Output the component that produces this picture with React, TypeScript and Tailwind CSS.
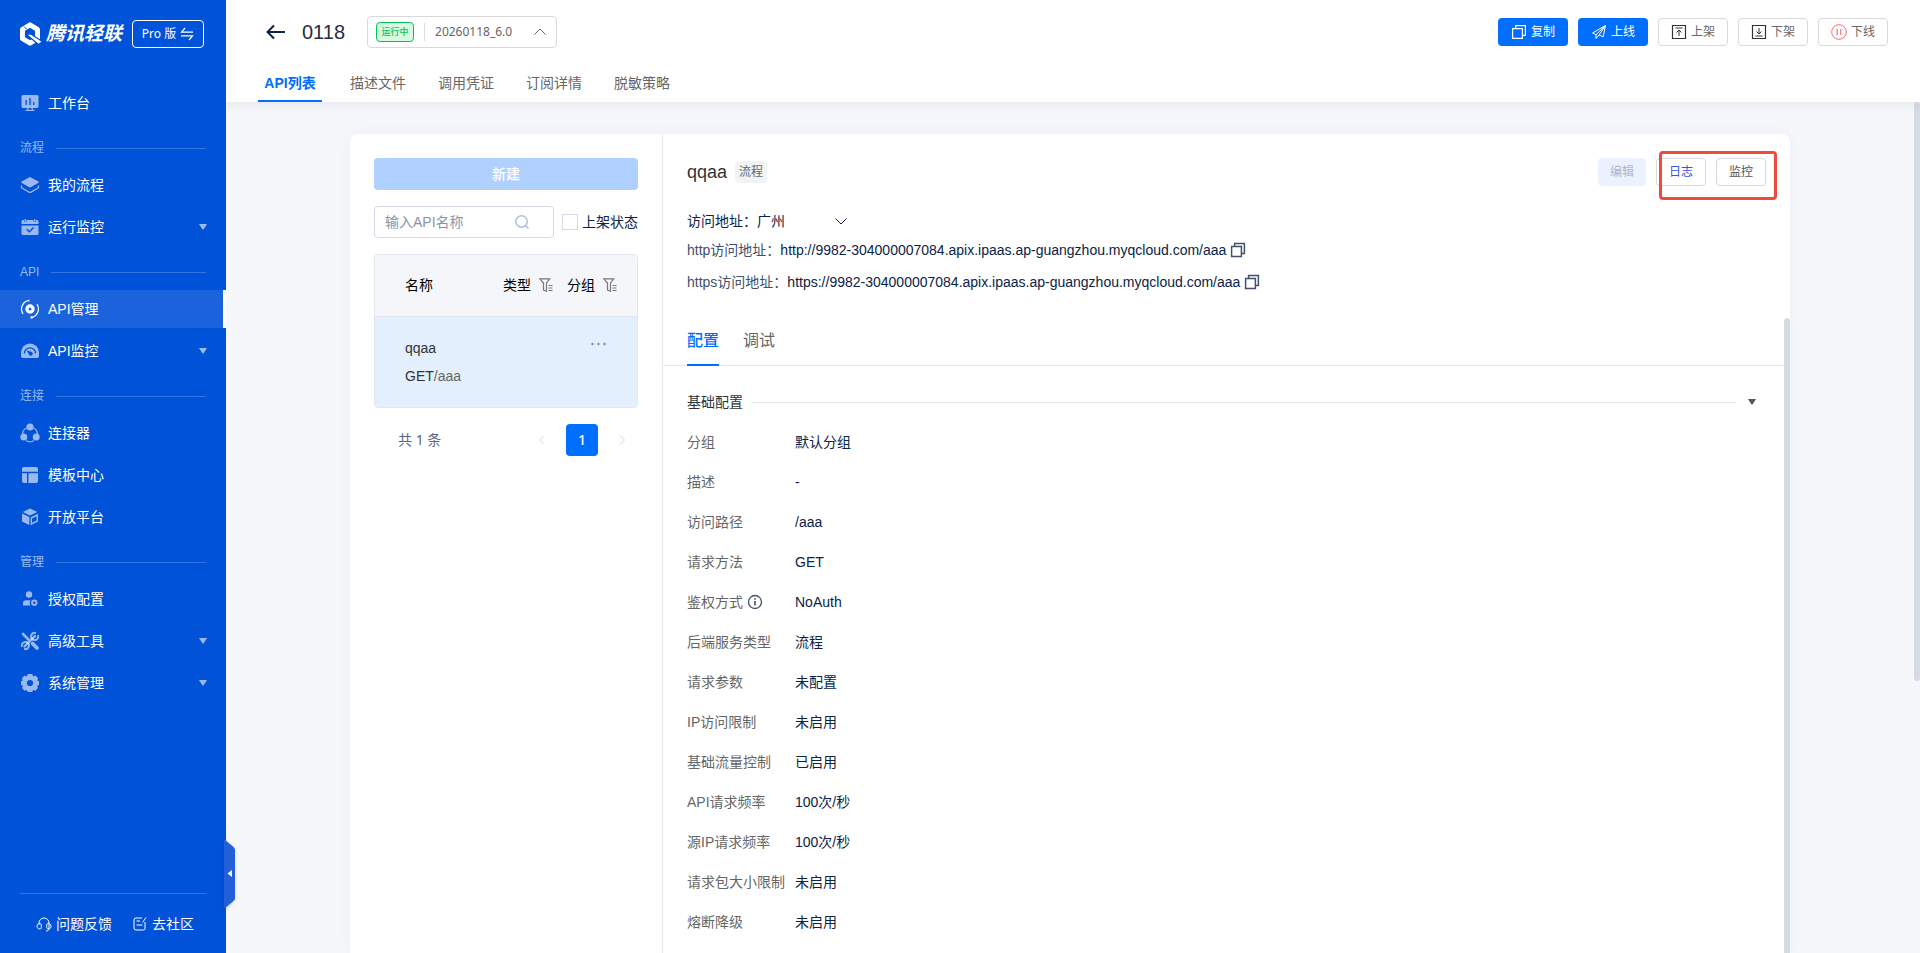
import { useState, type ReactNode } from 'react'

const sections: { title?: string; items: { label: string; icon: ReactNode; expandable?: boolean }[] }[] = [
  { items: [{ label: '工作台', icon: <BoardIcon /> }] },
  {
    title: '流程',
    items: [
      { label: '我的流程', icon: <LayersIcon /> },
      { label: '运行监控', icon: <CalendarIcon />, expandable: true },
    ],
  },
  {
    title: 'API',
    items: [
      { label: 'API管理', icon: <ApiIcon /> },
      { label: 'API监控', icon: <GaugeIcon />, expandable: true },
    ],
  },
  {
    title: '连接',
    items: [
      { label: '连接器', icon: <ConnectorIcon /> },
      { label: '模板中心', icon: <TemplateIcon /> },
      { label: '开放平台', icon: <CubeIcon /> },
    ],
  },
  {
    title: '管理',
    items: [
      { label: '授权配置', icon: <UserIcon /> },
      { label: '高级工具', icon: <ToolsIcon />, expandable: true },
      { label: '系统管理', icon: <GearIcon />, expandable: true },
    ],
  },
]

const topTabs = ['API列表', '描述文件', '调用凭证', '订阅详情', '脱敏策略']

const details = [
  { label: '分组', value: '默认分组' },
  { label: '描述', value: '-' },
  { label: '访问路径', value: '/aaa' },
  { label: '请求方法', value: 'GET' },
  { label: '鉴权方式', value: 'NoAuth', info: true },
  { label: '后端服务类型', value: '流程' },
  { label: '请求参数', value: '未配置' },
  { label: 'IP访问限制', value: '未启用' },
  { label: '基础流量控制', value: '已启用' },
  { label: 'API请求频率', value: '100次/秒' },
  { label: '源IP请求频率', value: '100次/秒' },
  { label: '请求包大小限制', value: '未启用' },
  { label: '熔断降级', value: '未启用' },
]

const host = '9982-304000007084.apix.ipaas.ap-guangzhou.myqcloud.com/aaa'

/* ---------- Icons ---------- */

function Logo() {
  return (
    <svg width="22" height="24" viewBox="0 0 22 24">
      <path d="M10 2.900 17.500 7.300v9.400L10 21.100 2.500 16.700V7.300Z" fill="none" stroke="#fff" strokeWidth="5" strokeLinejoin="round" />
      <path d="M6.500 12.500 10.500 11.800 22.500 19.500 18.500 22.500Z" fill="#fff" stroke="#0052d9" strokeWidth="1.200" />
      <path d="M4 4.500 7 7.500" stroke="#0052d9" strokeWidth="1" />
    </svg>
  )
}

function BoardIcon() {
  return (
    <svg width="20" height="20" viewBox="0 0 20 20" fill="currentColor">
      <path
        fillRule="evenodd"
        d="M3 2h14a1.500 1.500 0 0 1 1.500 1.500v10A1.500 1.500 0 0 1 17 15H3a1.500 1.500 0 0 1-1.500-1.500v-10A1.500 1.500 0 0 1 3 2Zm2.500 5v5h1.300V7H5.500Zm3.800-2v7h1.400V5H9.300Zm3.900 4v3h1.300V9h-1.300Z"
      />
      <path d="M7 15h1.500v1.500H7zM11.500 15H13v1.500h-1.500zM5.500 16.700h9V18h-9z" />
    </svg>
  )
}

function LayersIcon() {
  return (
    <svg width="20" height="20" viewBox="0 0 20 20" fill="currentColor">
      <path d="M10 2 18.500 6.600Q19.200 7.200 18.500 7.800L10.700 12.200Q10 12.500 9.300 12.200L1.500 7.800Q.8 7.200 1.500 6.600Z" />
      <path d="M1.500 10.500v2.200L9.300 17.300q.7.300 1.400 0l7.800-4.600v-2.200" fill="none" stroke="currentColor" strokeWidth="1.300" />
    </svg>
  )
}

function CalendarIcon() {
  return (
    <svg width="20" height="20" viewBox="0 0 20 20" fill="currentColor">
      <path d="M3 3h1v1.500h2.500V3h7v1.500H16V3h1a1.500 1.500 0 0 1 1.500 1.500V7h-17V4.500A1.500 1.500 0 0 1 3 3Z" />
      <path d="M4.600 2H6v2H4.600zM14 2h1.400v2H14z" />
      <path
        fillRule="evenodd"
        d="M1.500 8.500h17v8A1.500 1.500 0 0 1 17 18H3a1.500 1.500 0 0 1-1.500-1.500Zm5.700 3.300-.9.900 3 3 4.800-4.700-1-1-3.800 3.700Z"
      />
    </svg>
  )
}

function ApiIcon() {
  return (
    <svg width="20" height="20" viewBox="0 0 20 20" fill="none" stroke="currentColor">
      <circle cx="10" cy="10" r="3.100" strokeWidth="3.200" />
      <path d="M9 1.300A8.800 8.800 0 0 0 3 14.800M11 18.700A8.800 8.800 0 0 0 17 5.200" strokeWidth="1.200" />
      <circle cx="8.800" cy="1.600" r=".9" fill="currentColor" stroke="none" />
      <circle cx="11.600" cy="18.400" r="1.200" fill="currentColor" stroke="none" />
    </svg>
  )
}

function GaugeIcon() {
  return (
    <svg width="20" height="20" viewBox="0 0 20 20">
      <path fill="currentColor" d="M1 11.500a9 9 0 0 1 18 0v3.500a2 2 0 0 1-2 2H3a2 2 0 0 1-2-2Z" />
      <path d="M4.400 12.500a5.600 5.600 0 0 1 11.200 0" fill="none" stroke="#0052d9" strokeWidth="1.300" />
      <path d="M6.800 9.300l4.200 1.500a2 2 0 1 1-2.200 2.400Z" fill="#0052d9" />
    </svg>
  )
}

function ConnectorIcon() {
  return (
    <svg width="20" height="20" viewBox="0 0 20 20" fill="currentColor">
      <circle cx="10" cy="4" r="3.600" />
      <circle cx="3.800" cy="14" r="3.500" />
      <circle cx="16.200" cy="14" r="3.500" />
      <path d="M6.500 5C4 6.300 2.600 8.500 2.600 11M13.500 5c2.500 1.300 3.900 3.500 3.900 6M6 17.500c2.500 1.600 5.500 1.600 8 0" fill="none" stroke="currentColor" strokeWidth="1.200" />
    </svg>
  )
}

function TemplateIcon() {
  return (
    <svg width="20" height="20" viewBox="0 0 20 20" fill="currentColor">
      <path d="M4 2h12a2 2 0 0 1 2 2v2.700H2V4a2 2 0 0 1 2-2ZM2 8.200h5V18H4a2 2 0 0 1-2-2ZM8.400 8.200H18V16a2 2 0 0 1-2 2H8.400Z" />
    </svg>
  )
}

function CubeIcon() {
  return (
    <svg width="20" height="20" viewBox="0 0 20 20" fill="currentColor">
      <path d="M10 1.500 17.300 5 10 8.600 2.700 5ZM2 6.500l7.300 3.600V18L2 14.500Z" />
      <path d="m11.300 11 6-3v6l-6 3Z" fill="none" stroke="currentColor" strokeWidth="1.400" />
    </svg>
  )
}

function UserIcon() {
  return (
    <svg width="20" height="20" viewBox="0 0 20 20" fill="currentColor">
      <circle cx="9" cy="5.500" r="3.200" />
      <path d="M6 11.300h4.600c-1 1.500-1.200 3.500-.4 5.200H3v-2.200a3 3 0 0 1 3-3Z" />
      <circle cx="14.300" cy="13.700" r="2.200" fill="none" stroke="currentColor" strokeWidth="1.900" />
    </svg>
  )
}

function ToolsIcon() {
  return (
    <svg width="20" height="20" viewBox="0 0 20 20" fill="none" stroke="currentColor" strokeLinecap="round">
      <path d="M3 3l5.500 5.500" strokeWidth="2.600" />
      <path d="M12.500 12.500l4.500 4.500" strokeWidth="3.800" />
      <path d="M4.500 15.500 15 5" strokeWidth="2.400" />
      <path d="M15.200 1.900a3.600 3.600 0 1 0 3 3.100" strokeWidth="2" />
      <path d="M4.800 18.100a3.600 3.600 0 1 0-3-3.100" strokeWidth="2" />
    </svg>
  )
}

function GearIcon() {
  return (
    <svg width="20" height="20" viewBox="0 0 20 20" fill="currentColor">
      <path
        fillRule="evenodd"
        d="M7.700 1h4.600l.8 2.400 2.400-1 2.600 2.900-.9 2.200L19 8.300v3.700l-2 .8 1 2.300-2.700 2.700-2.300-.9-.7 2.100H7.700L7 16.900l-2.300.9L2 15.100l1-2.300-2-.8V8.300l1.800-.8-.9-2.200 2.600-2.900 2.400 1ZM10 6.900a3.100 3.100 0 1 0 0 6.200 3.100 3.100 0 0 0 0-6.200Z"
      />
    </svg>
  )
}

function CopyIcon({ strokeWidth = 1.2 }: { strokeWidth?: number }) {
  return (
    <svg width="16" height="16" viewBox="0 0 16 16" fill="none" stroke="currentColor" strokeWidth={strokeWidth}>
      <path d="M1.600 4.600h9.800v9.800H1.600zM4.600 4.600V1.600h9.800v9.800h-3" />
    </svg>
  )
}

function SendIcon() {
  return (
    <svg width="16" height="16" viewBox="0 0 16 16" fill="none" stroke="currentColor" strokeWidth="1" strokeLinejoin="round">
      <path d="M14.500 1.500 1.500 9l3.500 1.700L14.500 1.500l-2.300 11.200L8 11M5 10.700V14.500L8 11l6.500-9.500" />
    </svg>
  )
}

function ShelfIcon({ down }: { down?: boolean }) {
  return (
    <svg width="16" height="16" viewBox="0 0 16 16" fill="none" stroke="#333" strokeWidth="1">
      <path d="M1.500 1.500h13v13h-13z" strokeWidth="1.200" />
      {down ? <path d="M8 4v6M5.500 7.500 8 10l2.500-2.500M4.500 12h7" /> : <path d="M8 12V6M5.500 8.500 8 6l2.500 2.500M4.500 4h7" />}
    </svg>
  )
}

function PauseIcon() {
  return (
    <svg width="16" height="16" viewBox="0 0 16 16" fill="none" stroke="#f56c77" strokeWidth="1">
      <circle cx="8" cy="8" r="7.300" />
      <path d="M6.200 5v6M9.800 5v6" strokeWidth="1.200" />
    </svg>
  )
}

function FilterIcon() {
  return (
    <svg width="14" height="14" viewBox="0 0 14 14" fill="none" stroke="#777" strokeWidth="1.200">
      <path d="M.8.800h9.900L7.500 5v8.200L4.500 12V5Z" />
      <path d="M9.500 7.500h4M9.500 10h4M9.500 12.500h4" />
    </svg>
  )
}

function Chevron({ className, d }: { className?: string; d: string }) {
  return (
    <svg className={className} width="12" height="12" viewBox="0 0 12 12" fill="none" stroke="currentColor">
      <path d={d} />
    </svg>
  )
}

function Caret({ className }: { className?: string }) {
  return (
    <svg className={className} width="8" height="6" viewBox="0 0 8 6" fill="currentColor">
      <path d="M0 0h8L4.500 5.500h-1Z" />
    </svg>
  )
}

/* ---------- Layout ---------- */

function Sidebar() {
  const [active, setActive] = useState('API管理')

  return (
    <aside className="relative z-20 flex w-[226px] shrink-0 flex-col bg-[#0052d9] text-white">
      <div className="flex h-17 items-center pl-5">
        <Logo />
        <span className="ml-1 text-[19px] font-bold italic">腾讯轻联</span>
        <button className="ml-[10px] flex h-7 w-18 items-center justify-center gap-1 rounded border border-white font-['Noto_Sans','Noto_Sans_CJK_SC',sans-serif] text-xs">
          Pro 版
          <svg width="14" height="14" viewBox="0 0 14 14" fill="none" stroke="#fff" strokeWidth="1.200">
            <path d="M5 1 1.500 5.200H13M1 8.800h11.500L9 13" />
          </svg>
        </button>
      </div>

      <nav className="mt-4">
        {sections.map((section) => (
          <div key={section.items[0].label}>
            {section.title && (
              <div className="mt-2 flex h-9 items-center gap-3 px-5 text-xs text-white/60">
                {section.title}
                <span className="h-px flex-1 bg-white/20" />
              </div>
            )}
            <div className="flex flex-col gap-1">
              {section.items.map((item) => (
                <button
                  key={item.label}
                  onClick={() => setActive(item.label)}
                  className={`flex h-[38px] items-center gap-2 border-r-[3px] pr-4 pl-5 text-sm ${
                    active === item.label ? 'border-white bg-white/10' : 'border-transparent'
                  }`}
                >
                  <span className={active === item.label ? 'text-white' : 'text-white/60'}>{item.icon}</span>
                  {item.label}
                  {item.expandable && <Caret className="ml-auto text-white/60" />}
                </button>
              ))}
            </div>
          </div>
        ))}
      </nav>

      <div className="mx-5 mt-auto flex h-15 items-center justify-center gap-5 border-t border-white/20 pl-1 text-sm">
        <a href="#feedback" className="flex items-center gap-1">
          <svg width="16" height="16" viewBox="0 0 16 16" fill="none" stroke="currentColor">
            <path d="M3 8.500V7a5 5 0 0 1 10 0v5c0 2-1 3-3 3M4 7.500c-2 0-3 1.200-3 2.800S2.200 13 4 13c1 0 1.300-.5 1.300-2.700S5 7.500 4 7.500ZM12.500 7.500c1.500 0 2.500 1.200 2.500 2.800S14 13 12.500 13c-1.300 0-1.800-.5-1.800-2.700s.5-2.800 1.800-2.800Z" />
          </svg>
          问题反馈
        </a>
        <a href="#community" className="flex items-center gap-1">
          <svg width="16" height="16" viewBox="0 0 16 16" fill="none" stroke="currentColor">
            <path d="M10 2H4a2 2 0 0 0-2 2v8a2 2 0 0 0 2 2h7.500a1.500 1.500 0 0 0 1.500-1.500V6M4.500 5H8M4.500 9h6M10.500 6.500 14 1.500" />
          </svg>
          去社区
        </a>
      </div>

      <button aria-label="收起" className="absolute right-[-10px] bottom-11 h-[70px] w-3 text-[#225fd8] drop-shadow">
        <svg width="12" height="70" viewBox="0 0 12 70">
          <path fill="currentColor" d="M0 0 9.500 8q1.500 1.500 1.500 3v48q0 1.500-1.500 3L0 70Z" />
          <path fill="#fff" d="M8 31v7l-4.500-3.500Z" />
        </svg>
      </button>
    </aside>
  )
}

function Header() {
  const button = 'flex h-7 w-[70px] items-center justify-center gap-1 rounded text-xs'

  return (
    <header className="relative z-10 bg-white px-7 shadow-[0_2px_12px_rgba(0,0,0,0.08)]">
      <div className="flex items-center pt-4 pr-1 pl-3">
        <button aria-label="返回">
          <svg width="20" height="16" viewBox="0 0 20 16" fill="none" stroke="#0b2346" strokeWidth="2">
            <path d="M8 1.500 1.500 8 8 14.500M1.500 8H19" />
          </svg>
        </button>
        <h1 className="ml-4 text-xl text-[#222f45]">0118</h1>
        <div className="relative ml-[22px] flex h-8 w-[190px] items-center rounded border border-[#d9d9d9] pl-2 font-['Noto_Sans','Noto_Sans_CJK_SC',sans-serif] text-xs text-[#666]">
          <span className="flex h-5 w-[38px] items-center justify-center rounded-sm border border-[#0abf5b] bg-[#d6fbe0] text-[9px] font-medium text-[#0abf5b]">
            运行中
          </span>
          <span className="mx-[10px] h-[18px] w-px bg-[#dcdfe6]" />
          <select aria-label="版本" className="flex-1 appearance-none outline-none">
            <option>20260118_6.0</option>
          </select>
          <Chevron className="pointer-events-none absolute right-[10px]" d="M.5 8.500 6 3l5.500 5.500" />
        </div>

        <div className="ml-auto flex gap-[10px]">
          <button className={`${button} bg-[#006eff] text-white`}>
            <CopyIcon />
            复制
          </button>
          <button className={`${button} bg-[#006eff] text-white`}>
            <SendIcon />
            上线
          </button>
          <button className={`${button} border border-[#d9d9d9] text-[#666]`}>
            <ShelfIcon />
            上架
          </button>
          <button className={`${button} border border-[#d9d9d9] text-[#666]`}>
            <ShelfIcon down />
            下架
          </button>
          <button className={`${button} border border-[#d9d9d9] text-[#666]`}>
            <PauseIcon />
            下线
          </button>
        </div>
      </div>

      <div className="mt-4 flex gap-4">
        {topTabs.map((tab, i) => (
          <button
            key={tab}
            className={`relative h-[38px] w-18 text-sm ${i === 0 ? 'font-bold text-[#006eff]' : 'text-[#666]'}`}
          >
            {tab}
            {i === 0 && <span className="absolute inset-x-1 bottom-0 h-0.5 bg-[#006eff]" />}
          </button>
        ))}
      </div>
    </header>
  )
}

function ApiList() {
  return (
    <section className="w-[313px] shrink-0 border-r border-[#e7e7e7] p-6 text-sm">
      <button className="h-8 w-full rounded bg-[#b0d1ff] font-medium text-white" disabled>
        新建
      </button>

      <div className="mt-4 flex items-center justify-between">
        <div className="relative flex items-center">
          <input
            type="text"
            aria-label="输入API名称"
            placeholder="输入API名称"
            className="h-8 w-[180px] rounded border border-[#d3d9e6] px-[10px] outline-none placeholder:text-[#8b93a7]"
          />
          <svg className="absolute right-6" width="16" height="16" viewBox="0 0 16 16" fill="none" stroke="#b0bfd6" strokeWidth="1.500">
            <circle cx="7.500" cy="7.500" r="5.700" />
            <path d="m11.500 11.500 3 3" />
          </svg>
        </div>
        <label className="flex items-center gap-1 text-[#0b2346]">
          <input type="checkbox" className="size-4 appearance-none border border-[#d3d9e6]" />
          上架状态
        </label>
      </div>

      <div className="mt-4 overflow-hidden rounded border border-[#e2e6f0]">
        <table className="w-full table-fixed text-left">
          <thead className="h-[61px] border-b border-[#e2e6f0] bg-[#f5f6fa] text-black">
            <tr>
              <th className="w-[128px] pl-[30px] font-normal">名称</th>
              <th className="w-16 font-normal">
                <span className="flex items-center gap-2">
                  类型
                  <FilterIcon />
                </span>
              </th>
              <th className="font-normal">
                <span className="flex items-center gap-2">
                  分组
                  <FilterIcon />
                </span>
              </th>
            </tr>
          </thead>
          <tbody>
            <tr className="h-[91px] bg-[#e3effd]">
              <td colSpan={2} className="pl-[30px] leading-7 text-[#333]">
                <div>qqaa</div>
                <div>
                  GET<span className="text-[#666]">/aaa</span>
                </div>
              </td>
              <td className="pt-4 pl-6 align-top">
                <button aria-label="更多" className="text-[#7a86b0]">
                  <svg width="16" height="18" viewBox="0 0 16 18" fill="currentColor">
                    <circle cx="1.500" cy="11" r="1.200" />
                    <circle cx="7.500" cy="11" r="1.200" />
                    <circle cx="13.500" cy="11" r="1.200" />
                  </svg>
                </button>
              </td>
            </tr>
          </tbody>
        </table>
      </div>

      <div className="mt-4 flex items-center pl-6 font-['Noto_Sans','Noto_Sans_CJK_SC',sans-serif] text-[#5a6488]">
        共 1 条
        <div className="ml-auto flex items-center text-[#d0d5e0]">
          <button aria-label="上一页" className="flex size-8 items-center justify-center">
            <Chevron d="M8 1.500 3.500 6 8 10.500" />
          </button>
          <button className="mx-2 size-8 rounded bg-[#006eff] font-medium text-white">1</button>
          <button aria-label="下一页" className="flex size-8 items-center justify-center">
            <Chevron d="M4 1.500 8.500 6 4 10.500" />
          </button>
        </div>
      </div>
    </section>
  )
}

function ApiDetail() {
  return (
    <section className="relative flex min-w-0 flex-1 flex-col overflow-hidden">
      <div className="flex h-[76px] items-center px-6">
        <h2 className="text-lg text-[#333]">qqaa</h2>
        <span className="ml-2 flex h-[22px] items-center rounded-sm bg-[#f2f3f5] px-1 text-xs text-[#666]">流程</span>
        <div className="ml-auto flex gap-[10px] text-xs">
          <button className="h-7 w-12 rounded bg-[#ebf2ff] text-[#b0b6cc]" disabled>
            编辑
          </button>
          <button className="h-7 w-[50px] rounded border border-[#d9d9d9] text-[#3355e0]">日志</button>
          <button className="h-7 w-[50px] rounded border border-[#d9d9d9] text-[#555]">监控</button>
        </div>
        <div className="absolute top-[17px] right-[13px] h-[49px] w-[118px] rounded-sm border-[3px] border-[#f04a3e]" />
      </div>

      <div className="-mt-1 pl-6 text-sm text-[#0b2346]">
        <div className="flex h-[30px] items-center">
          <label htmlFor="region">访问地址：</label>
          <div className="relative flex items-center">
            <select id="region" className="w-[90px] appearance-none outline-none">
              <option>广州</option>
            </select>
            <Chevron className="pointer-events-none absolute right-0" d="M.5 3.500 6 9l5.500-5.500" />
          </div>
        </div>
        <div className="flex h-7 items-center">
          <span className="text-[#42506b]">http访问地址：</span>
          http://{host}
          <button aria-label="复制http地址" className="ml-1 text-[#42506b]">
            <CopyIcon strokeWidth={1.5} />
          </button>
        </div>
        <div className="flex h-9 items-center">
          <span className="text-[#42506b]">https访问地址：</span>
          https://{host}
          <button aria-label="复制https地址" className="ml-1 text-[#42506b]">
            <CopyIcon strokeWidth={1.5} />
          </button>
        </div>
      </div>

      <div className="mt-4 mr-[6px] flex h-[50px] gap-6 border-b border-[#e7e7e7] pl-6">
        <button className="-mb-px border-b-2 border-[#006eff] pt-0.5 font-medium text-[#006eff]">配置</button>
        <button className="-mb-px border-b-2 border-transparent pt-0.5 text-[#666]">调试</button>
      </div>

      <div className="overflow-hidden pt-4 pr-[34px] pl-6 text-sm">
        <div className="flex h-10 items-center text-[#333]">
          基础配置
          <span className="ml-2 h-px flex-1 bg-[#e7e7e7]" />
          <button aria-label="收起基础配置" className="ml-3 text-[#555]">
            <Caret />
          </button>
        </div>
        <dl>
          {details.map((row) => (
            <div key={row.label} className="flex h-10 items-center">
              <dt className="flex w-[108px] items-center gap-1 text-[#666]">
                {row.label}
                {row.info && (
                  <svg width="16" height="16" viewBox="0 0 16 16" fill="none" stroke="#42506b" strokeWidth="1.300">
                    <circle cx="8" cy="8" r="6.500" />
                    <path d="M8 7v4.500M8 4.300v1.500" strokeWidth="1.600" />
                  </svg>
                )}
              </dt>
              <dd className="text-[#0b2346]">{row.value}</dd>
            </div>
          ))}
        </dl>
      </div>

      <span className="absolute top-[184px] right-0 bottom-0 w-[6px] rounded-t-full bg-[#d4dce3]" />
    </section>
  )
}

export default function App() {
  return (
    <div className="flex h-screen overflow-hidden bg-[#f5f7fb] font-['Liberation_Sans','Noto_Sans_CJK_SC',sans-serif]">
      <Sidebar />
      <div className="flex min-w-0 flex-1 flex-col">
        <Header />
        <main className="relative flex min-h-0 flex-1 pt-8 pr-[6px]">
          <div className="mx-auto flex w-full max-w-[1440px] rounded-t-lg bg-white shadow-[0_0_16px_rgba(0,0,0,0.04)]">
            <ApiList />
            <ApiDetail />
          </div>
          <span className="absolute top-0 right-0 h-[68%] w-[6px] rounded-full bg-[#d4dbe4]" />
        </main>
      </div>
    </div>
  )
}
